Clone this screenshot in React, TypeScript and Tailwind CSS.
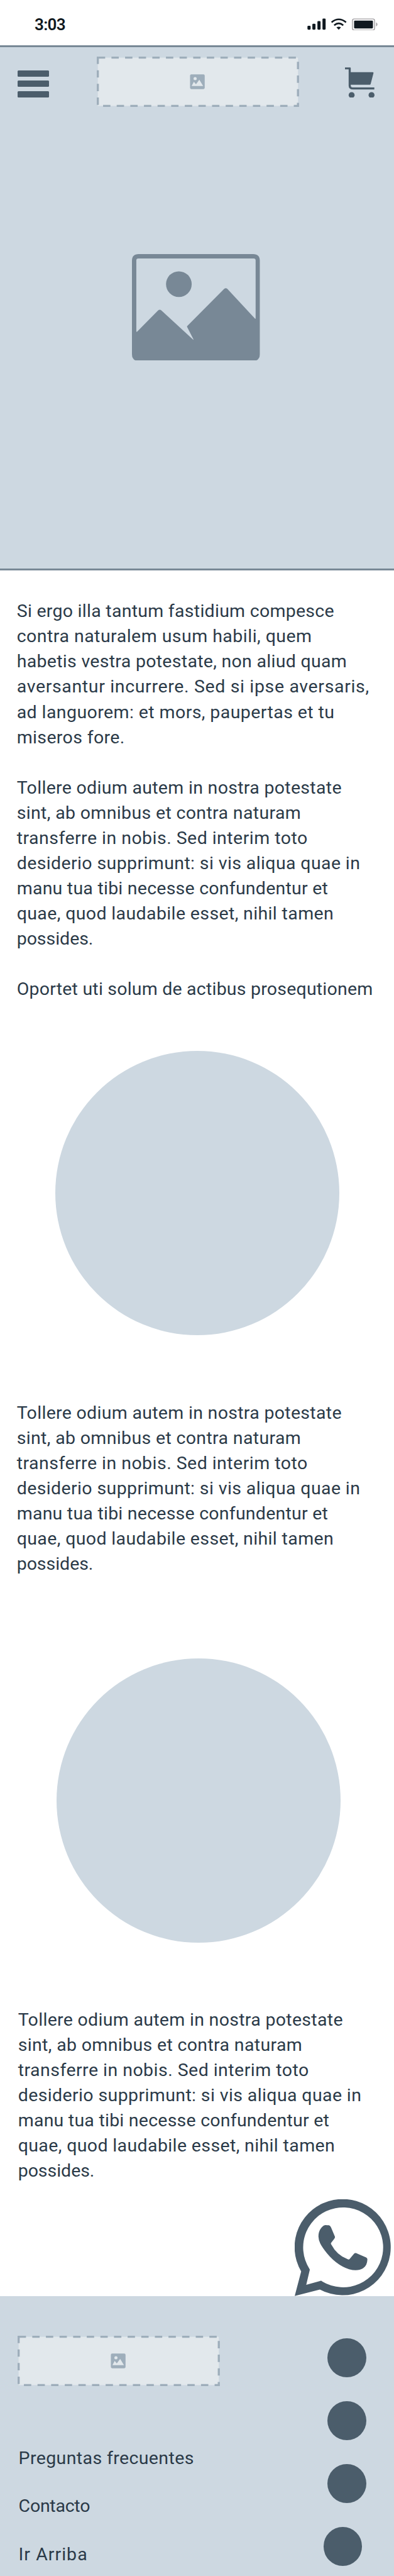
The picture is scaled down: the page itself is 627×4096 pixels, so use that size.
type Line = { text: string; spacing: string };

const intro: Line[] = [
  { text: "Si ergo illa tantum fastidium compesce", spacing: "tracking-[0.27px]" },
  { text: "contra naturalem usum habili, quem", spacing: "tracking-[0.474px]" },
  { text: "habetis vestra potestate, non aliud quam", spacing: "tracking-[0.295px]" },
  { text: "aversantur incurrere. Sed si ipse aversaris,", spacing: "tracking-[0.648px]" },
  { text: "ad languorem: et mors, paupertas et tu", spacing: "tracking-[0.418px]" },
  { text: "miseros fore.", spacing: "tracking-[0.355px]" },
];

const tollere: Line[] = [
  { text: "Tollere odium autem in nostra potestate", spacing: "tracking-[0.304px]" },
  { text: "sint, ab omnibus et contra naturam", spacing: "tracking-[0.346px]" },
  { text: "transferre in nobis. Sed interim toto", spacing: "tracking-[0.463px]" },
  { text: "desiderio supprimunt: si vis aliqua quae in", spacing: "tracking-[0.386px]" },
  { text: "manu tua tibi necesse confundentur et", spacing: "tracking-[0.233px]" },
  { text: "quae, quod laudabile esset, nihil tamen", spacing: "tracking-[0.374px]" },
  { text: "possides.", spacing: "tracking-[-0.04px]" },
];

const closing: Line[] = [
  { text: "Oportet uti solum de actibus prosequtionem", spacing: "tracking-[0.211px]" },
];

function Paragraph({ lines }: { lines: Line[] }) {
  return (
    <p>
      {lines.map((line) => (
        <span key={line.text} className={`block whitespace-nowrap ${line.spacing}`}>
          {line.text}
        </span>
      ))}
    </p>
  );
}

function LogoPlaceholder() {
  return (
    <svg viewBox="0 0 386 96" className="block h-[80.05px] w-[321.9px] shrink-0">
      <rect x="2" y="2" width="382" height="92" fill="#e2e8ec" />
      <rect x="2" y="2" width="382" height="92" fill="none" stroke="#9eaebb" strokeWidth="4" strokeDasharray="14 12" />
      <rect x="0" y="0" width="4" height="4" fill="#9eaebb" />
      <rect x="178" y="34" width="28" height="28" rx="2.5" fill="#9eaebb" />
      <circle cx="187.7" cy="42" r="3" fill="#e2e8ec" />
      <path d="M181 56L185.3 48L189.3 52.7L195.7 44L203 56Z" fill="#e2e8ec" />
    </svg>
  );
}

function StatusIcons() {
  return (
    <svg viewBox="44 40 403 74" className="block h-[20.57px] w-[112px]" fill="#101920">
      <rect x="45" y="87" width="18" height="22" rx="5" />
      <rect x="73" y="75" width="18" height="34" rx="5" />
      <rect x="102" y="60" width="18" height="49" rx="5" />
      <rect x="131" y="45" width="18" height="64" rx="5" />
      <path d="M183 67Q224 33 266 67" fill="none" stroke="#101920" strokeWidth="9" />
      <path d="M198 84Q224 62 250 84" fill="none" stroke="#101920" strokeWidth="9.5" />
      <path d="M211 96Q224 89 237 96L224 109Z" />
      <rect x="302.500" y="47.500" width="127" height="64" rx="10" fill="#fff" stroke="#a19fa2" strokeWidth="5" />
      <rect x="312" y="57" width="108" height="45" rx="5" />
      <path d="M438 67Q446 72 446 79Q446 86 438 91Z" fill="#a19fa2" />
    </svg>
  );
}

function CartIcon() {
  return (
    <svg viewBox="258 323 170 175" className="mt-[16.500px] block h-[48.650px] w-[47.260px] shrink-0" fill="#4b5d6b">
      <path d="M258 324H287Q291 324 291 328V351H417Q423 351 421 357L405 418Q404 423 399 423H291V427Q291 438 302 438H426V450H304Q279 450 279 428V335H258Z" />
      <circle cx="296" cy="482" r="17" />
      <circle cx="410" cy="482" r="17" />
    </svg>
  );
}

function PictureIcon() {
  return (
    <svg viewBox="156 132 732 611" className="block h-[169.840px] w-[203.470px]" fill="#788896">
      <path
        fillRule="evenodd"
        d="M194 132H850Q888 132 888 170V705Q888 743 850 743H194Q156 743 156 705V170Q156 132 194 132ZM192 157Q181 157 181 168V574Q181 579 186 575L305 455Q315 445 325 455L507 622Q509 623 507 618L472 549Q470 546 473 543L684 331Q693 323 702 331L860 501Q864 504 864 499V168Q864 157 853 157Z"
      />
      <circle cx="424.500" cy="304" r="73.500" />
    </svg>
  );
}

function ChatPhoneIcon() {
  return (
    <svg viewBox="189 101 552 554" className="block h-[154px] w-[153.430px]" fill="#4b5d6b">
      <path
        fillRule="evenodd"
        d="M226 514A275.300 275 0 1 1 333 617L189 654ZM275 506L255 590L339 567Q343 567 347 571A229 228.500 0 1 0 274 500Q276 503 275 506Z"
      />
      <path d="M354 252Q362 247 374 249L384 249Q392 250 397 262L419 314Q421 320 415 328L399 348Q394 353 398 359Q430 420 492 444Q500 447 504 442L528 413Q533 407 540 409L598 434Q606 438 605 446Q604 480 580 496Q550 514 500 501Q420 474 360 392Q325 348 325 315Q324 275 354 252Z" />
    </svg>
  );
}

export default function App() {
  return (
    <div className="flex h-[4096px] w-[627px] flex-col overflow-hidden bg-white font-['Roboto',sans-serif] text-[28.5px] leading-[40.026px] text-[#2b3a48]">
      <div className="flex h-[72px] shrink-0 items-start justify-between pr-[26px] pl-[55px] text-[#101920]">
        <span className="mt-[24px] text-[26px] leading-[30px] font-semibold tracking-[-0.7px]">3:03</span>
        <div className="mt-[27.800px]">
          <StatusIcons />
        </div>
      </div>

      <section className="flex h-[835px] shrink-0 flex-col items-center border-y-[3px] border-[#788896] bg-[#cdd8e1]">
        <header className="flex w-full items-start justify-between pt-[15px] pr-[31px] pl-[28.400px]">
          <div className="mt-[21.700px] flex w-[50px] flex-col gap-[6.700px]">
            <div className="h-[10px] rounded-[1.500px] bg-[#4b5d6b]" />
            <div className="h-[10px] rounded-[1.500px] bg-[#4b5d6b]" />
            <div className="h-[10px] rounded-[1.500px] bg-[#4b5d6b]" />
          </div>
          <div className="ml-[3.500px]">
            <LogoPlaceholder />
          </div>
          <CartIcon />
        </header>
        <div className="mt-[233.500px] mr-[3px]">
          <PictureIcon />
        </div>
      </section>

      <main className="flex h-[2743.700px] shrink-0 flex-col">
        <div className="flex flex-col gap-[40.026px] pt-[45.400px] pl-[26.700px]">
          <Paragraph lines={intro} />
          <Paragraph lines={tollere} />
          <Paragraph lines={closing} />
        </div>
        <div className="mt-[78px] ml-[88.200px] size-[452.200px] shrink-0 rounded-full bg-[#cdd8e1]" />
        <div className="mt-[103.800px] pl-[26.700px]">
          <Paragraph lines={tollere} />
        </div>
        <div className="mt-[129.700px] ml-[90px] size-[452.200px] shrink-0 rounded-full bg-[#cdd8e1]" />
        <div className="mt-[103.300px] pl-[28.700px]">
          <Paragraph lines={tollere} />
        </div>
        <div className="mt-[24.400px] flex justify-end pr-[4.100px]">
          <ChatPhoneIcon />
        </div>
      </main>

      <footer className="flex grow items-start justify-between bg-[#cdd8e1] pr-[44.200px] pl-[28.400px]">
        <div className="flex flex-col">
          <div className="mt-[63.400px]">
            <LogoPlaceholder />
          </div>
          <nav className="mt-[94.600px] flex flex-col gap-[36.700px] pl-[1.200px]">
            <a className="tracking-[0.38px]">Preguntas frecuentes</a>
            <a className="tracking-[-0.25px]">Contacto</a>
            <a className="tracking-[1.03px]">Ir Arriba</a>
          </nav>
        </div>
        <div className="mt-[67.500px] flex flex-col gap-[38.360px]">
          <div className="size-[61.700px] rounded-full bg-[#4b5d6b]" />
          <div className="size-[61.700px] rounded-full bg-[#4b5d6b]" />
          <div className="size-[61.700px] rounded-full bg-[#4b5d6b]" />
          <div className="-ml-[6.400px] size-[61.700px] rounded-full bg-[#4b5d6b]" />
        </div>
      </footer>
    </div>
  );
}
